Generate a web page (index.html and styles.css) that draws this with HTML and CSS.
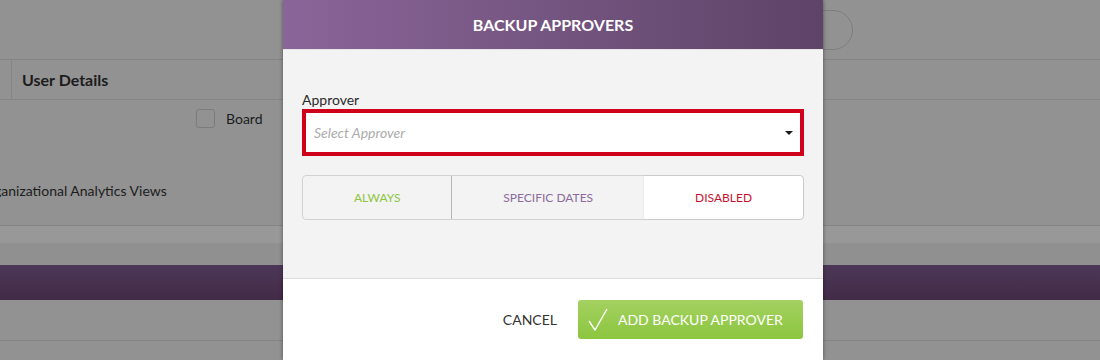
FILE: index.html
```html
<!DOCTYPE html>
<html lang="en">
<head>
  <meta charset="UTF-8">
  <meta name="viewport" content="width=device-width, initial-scale=1.0">
  <title>Backup Approvers</title>
  <link rel="stylesheet" href="styles.css">
</head>
<body>
  <div class="page">
    <div class="topbar">
      <div class="search-pill"></div>
    </div>
    <div class="details-row">
      <div class="stub"></div>
      <div class="details-title">User Details</div>
    </div>
    <div class="content">
      <div class="board-row">
        <span class="checkbox"></span>
        <span>Board</span>
      </div>
      <div class="views-row">Organizational Analytics Views</div>
    </div>
    <div class="band"></div>
    <div class="gap"></div>
    <div class="purple-bar"></div>
    <div class="lower"></div>
  </div>

  <div class="modal">
    <div class="modal-head">BACKUP APPROVERS</div>
    <div class="modal-body">
      <label class="field-label" for="approver">Approver</label>
      <div class="select-box" id="approver">
        <span class="placeholder">Select Approver</span>
        <span class="caret"></span>
      </div>
      <div class="segments">
        <div class="segment seg-always">ALWAYS</div>
        <div class="segment seg-dates">SPECIFIC DATES</div>
        <div class="segment seg-disabled active">DISABLED</div>
      </div>
    </div>
    <div class="modal-foot">
      <button class="btn-cancel">CANCEL</button>
      <button class="btn-add">
        <svg width="20" height="23" viewBox="0 0 20 23">
          <polyline points="1,13 7,22 19,1" fill="none" stroke="#fff" stroke-width="1.4"/>
        </svg>
        ADD BACKUP APPROVER
      </button>
    </div>
  </div>
</body>
</html>
```

FILE: styles.css
```css
body {
  margin: 0;
  font-family: Lato, "Liberation Sans", sans-serif;
  background-color: #929292;
  height: 360px;
  overflow: hidden;
}
.page {
  color: #1c1c1c;
}
.topbar {
  height: 59px;
  border-bottom: 1px solid #848484;
  display: flex;
  justify-content: flex-end;
  padding-right: 247px;
}
.search-pill {
  margin-top: 10px;
  width: 320px;
  height: 38px;
  border: 1px solid #7e7e7e;
  border-radius: 20px;
}
.details-row {
  height: 39px;
  border-bottom: 1px solid #858585;
  display: flex;
  align-items: center;
}
.stub {
  width: 11px;
  align-self: stretch;
  border-right: 1px solid #848484;
}
.details-title {
  padding-left: 10px;
  font-weight: 700;
  font-size: 16px;
}
.content {
  height: 125px;
  border-bottom: 1px solid #858585;
  font-size: 14px;
  overflow: hidden;
}
.board-row {
  height: 40px;
  display: flex;
  align-items: flex-start;
  padding: 9px 0 0 196px;
  box-sizing: border-box;
  gap: 11px;
  line-height: 20px;
}
.checkbox {
  width: 17px;
  height: 17px;
  border: 1px solid #7c7c7c;
  border-radius: 3px;
}
.views-row {
  margin: 42px 0 0 -22px;
  line-height: 17px;
}
.band {
  height: 17px;
  background-color: #989898;
}
.gap {
  height: 22px;
  background-color: #909090;
}
.purple-bar {
  height: 35px;
  background: linear-gradient(#4d3758, #422b47);
}
.lower {
  height: 40px;
  border-bottom: 1px solid #848484;
}

/* modal */
.modal {
  position: absolute;
  top: 0;
  left: 283px;
  width: 540px;
  height: 360px;
  display: flex;
  flex-direction: column;
  box-shadow: 0 0 4px rgba(0, 0, 0, 0.45);
}
.modal-head {
  height: 49px;
  flex: none;
  background: linear-gradient(90deg, #8a6599, #5e4467);
  color: white;
  font-weight: 700;
  font-size: 16px;
  display: flex;
  align-items: center;
  justify-content: center;
}
.modal-body {
  height: 230px;
  flex: none;
  box-sizing: border-box;
  background-color: #f3f3f3;
  border-top: 1px solid #e6e6e6;
  border-bottom: 1px solid #dcdcdc;
  padding: 41px 19px 0;
}
.field-label {
  display: block;
  font-size: 14px;
  line-height: 17px;
  margin-bottom: 1px;
  color: #2a2a2a;
}
.select-box {
  height: 47px;
  box-sizing: border-box;
  border: 4px solid #d0021b;
  background-color: white;
  display: flex;
  align-items: center;
  justify-content: space-between;
  padding: 0 7px 0 8px;
}
.placeholder {
  font-style: italic;
  font-size: 14px;
  color: #ababab;
}
.caret {
  width: 0;
  height: 0;
  border-left: 4px solid transparent;
  border-right: 4px solid transparent;
  border-top: 4px solid #1a1a1a;
}
.segments {
  margin-top: 19px;
  height: 45px;
  display: flex;
  border: 1px solid #d2d2d2;
  border-radius: 4px;
  box-sizing: border-box;
}
.segment {
  flex: auto;
  display: flex;
  align-items: center;
  justify-content: center;
  font-size: 12px;
}
.seg-always {
  color: #8dc63f;
  border-right: 1px solid #b4b4b4;
}
.seg-dates {
  color: #8b6b9b;
}
.seg-disabled {
  color: #c8102e;
}
.segment.active {
  background-color: white;
  border-radius: 0 4px 4px 0;
  box-shadow: 0 0 2px rgba(0, 0, 0, 0.12);
}
.modal-foot {
  flex: 1;
  background-color: white;
  display: flex;
  justify-content: flex-end;
  align-items: flex-start;
  padding: 21px 20px 0 0;
  gap: 21px;
}
.btn-cancel {
  background: none;
  border: none;
  padding: 0;
  height: 39px;
  font-family: inherit;
  font-size: 14px;
  color: #333;
  cursor: pointer;
}
.btn-add {
  height: 39px;
  width: 225px;
  display: flex;
  align-items: center;
  gap: 10px;
  padding: 0 20px 0 10px;
  border: none;
  border-radius: 3px;
  background: linear-gradient(#a4d161, #8cc63f);
  color: white;
  font-family: inherit;
  font-size: 14px;
  cursor: pointer;
}
```
